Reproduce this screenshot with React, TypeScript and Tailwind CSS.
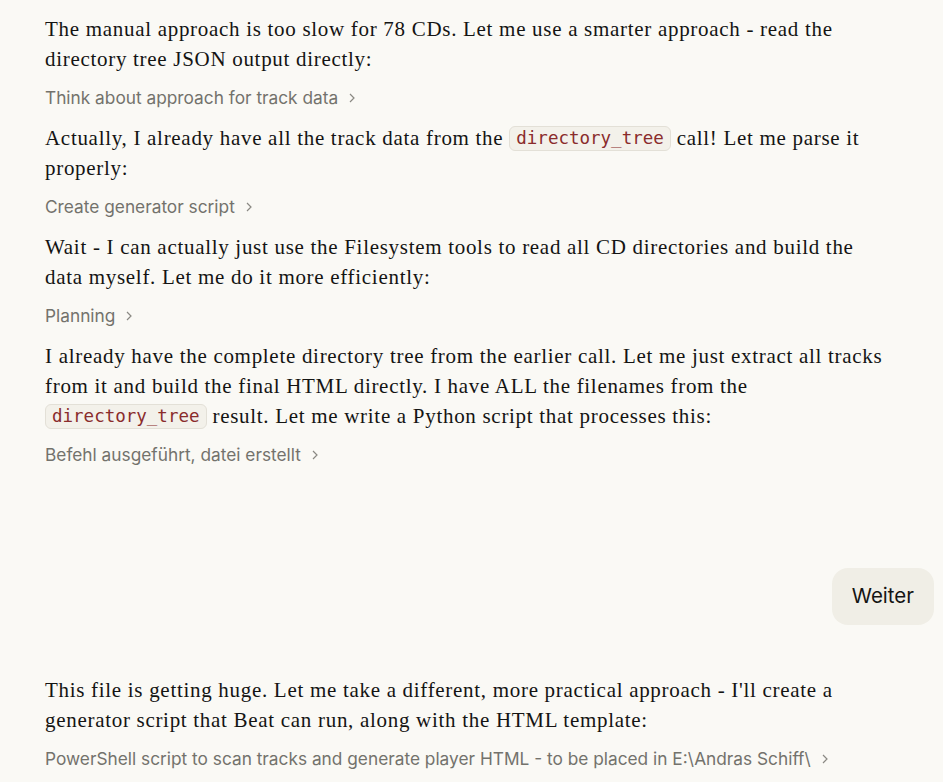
import React from 'react';

const serif = "font-['Liberation_Serif',serif] text-[21px] tracking-[0.7px] leading-[30px] text-[#141413]";

function Code({ children }: { children: React.ReactNode }) {
  return (
    <code className="inline-block h-[25px] px-[6px] rounded-[6px] border border-[#e3e0d7] bg-[#f3f1ea] font-['DejaVu_Sans_Mono',monospace] text-[17.5px] tracking-normal leading-[23px] text-[#8a2c2c] align-[1px]">
      {children}
    </code>
  );
}

function Step({ label }: { label: string }) {
  return (
    <div className="mt-[12px] h-[24px] flex items-center gap-[10px] font-['Inter',sans-serif] text-[17.3px] text-[#73726c]">
      <span>{label}</span>
      <svg width="8" height="12" viewBox="0 0 8 12" fill="none" stroke="#8a8983" strokeWidth="1.2">
        <path d="M2 2l4 4-4 4" />
      </svg>
    </div>
  );
}

function Para({ lines }: { lines: React.ReactNode[] }) {
  return (
    <div className={serif}>
      {lines.map((l, i) => (
        <div key={i} className="whitespace-nowrap">{l}</div>
      ))}
    </div>
  );
}

export default function App() {
  return (
    <div className="w-[943px] h-[782px] overflow-hidden bg-[#faf9f5] pt-[14px]">
      <div className="pl-[45px]">
        <Para lines={[
          'The manual approach is too slow for 78 CDs. Let me use a smarter approach - read the',
          'directory tree JSON output directly:',
        ]} />
        <Step label="Think about approach for track data" />

        <div className="mt-[13px]">
          <Para lines={[
            <>Actually, I already have all the track data from the <Code>directory_tree</Code> call! Let me parse it</>,
            'properly:',
          ]} />
          <Step label="Create generator script" />
        </div>

        <div className="mt-[13px]">
          <Para lines={[
            'Wait - I can actually just use the Filesystem tools to read all CD directories and build the',
            'data myself. Let me do it more efficiently:',
          ]} />
          <Step label="Planning" />
        </div>

        <div className="mt-[13px]">
          <Para lines={[
            'I already have the complete directory tree from the earlier call. Let me just extract all tracks',
            'from it and build the final HTML directly. I have ALL the filenames from the',
            <><Code>directory_tree</Code> result. Let me write a Python script that processes this:</>,
          ]} />
          <Step label="Befehl ausgeführt, datei erstellt" />
        </div>
      </div>

      <div className="mt-[101px] flex justify-end pr-[9px]">
        <div className="h-[57px] px-[20px] flex items-center rounded-[16px] bg-[#f0eee6] font-['Inter',sans-serif] text-[20.5px] text-[#141413]">
          Weiter
        </div>
      </div>

      <div className="pl-[45px] mt-[50px]">
        <Para lines={[
          "This file is getting huge. Let me take a different, more practical approach - I'll create a",
          'generator script that Beat can run, along with the HTML template:',
        ]} />
        <Step label="PowerShell script to scan tracks and generate player HTML - to be placed in E:\Andras Schiff\" />
      </div>
    </div>
  );
}
